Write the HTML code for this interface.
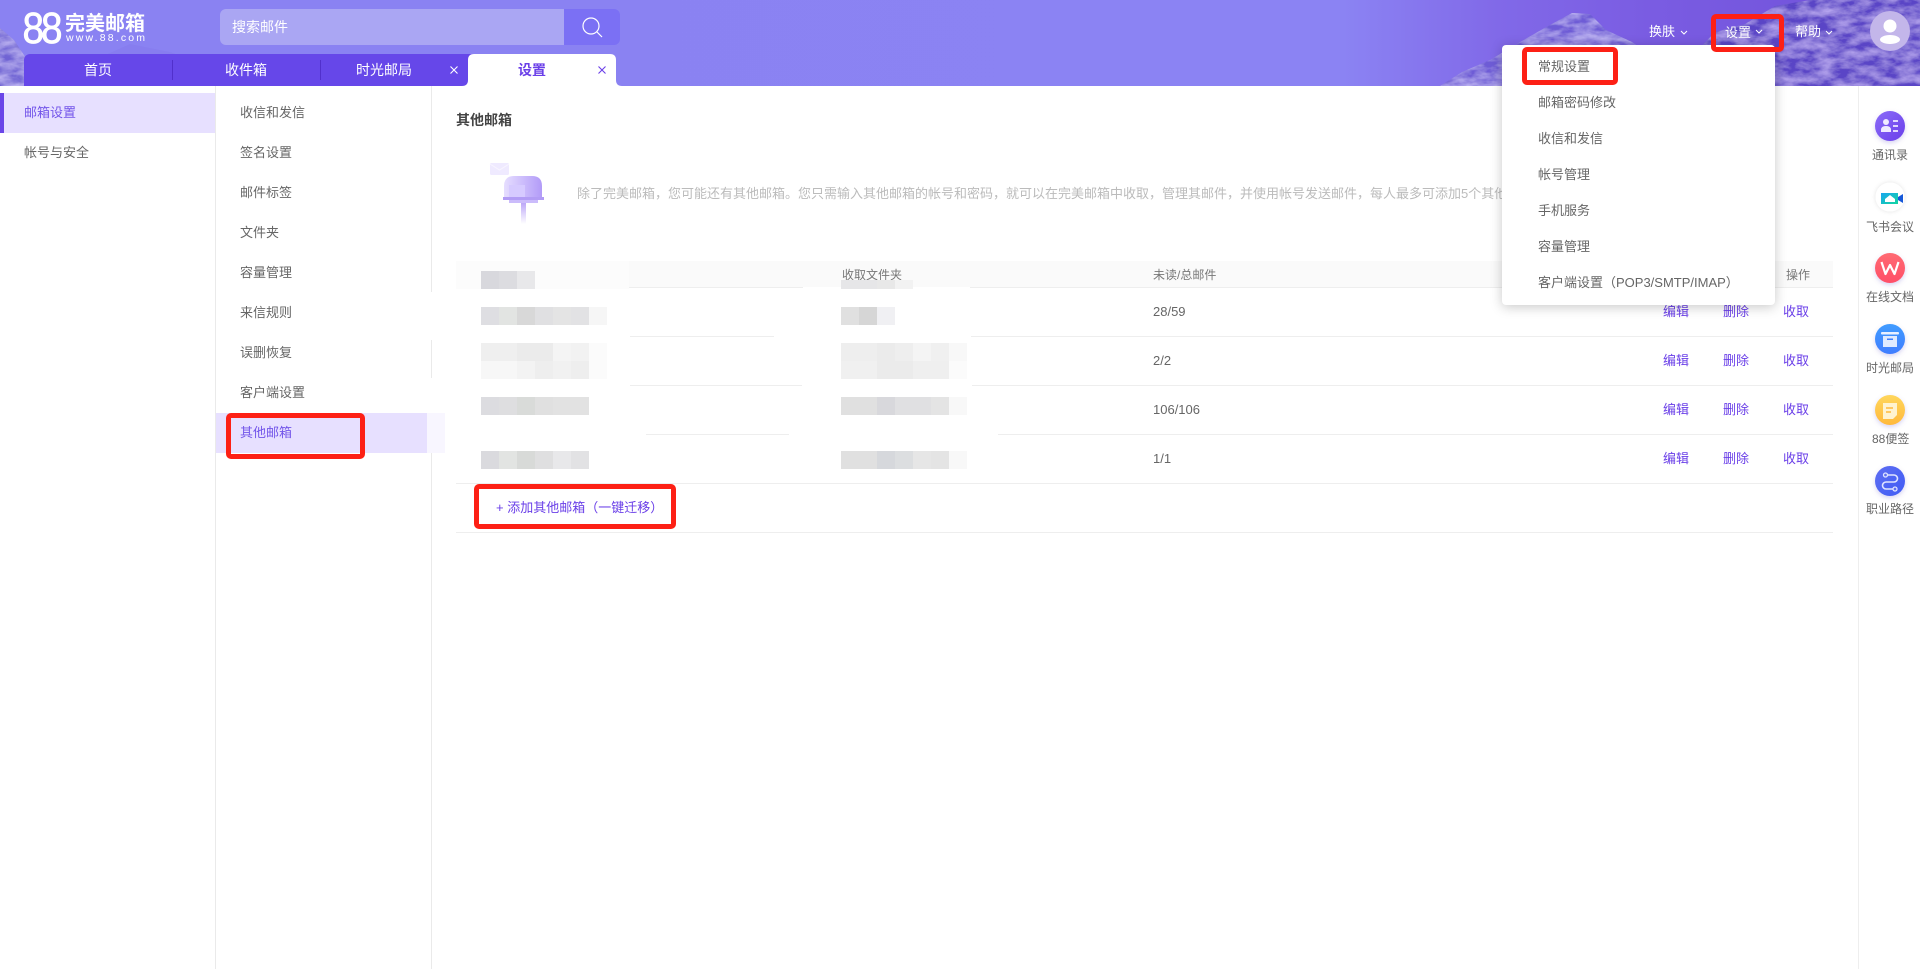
<!DOCTYPE html>
<html lang="zh-CN">
<head>
<meta charset="utf-8">
<title>88完美邮箱</title>
<style>
*{box-sizing:border-box}
html,body{margin:0;padding:0;width:1920px;height:969px;overflow:hidden;background:#fff}
body{position:relative;font-family:"Liberation Sans","Noto Sans CJK SC",sans-serif;font-size:13px;color:#666}
.t{position:absolute;white-space:nowrap;line-height:20px;height:20px;margin-top:1px}
.a{position:absolute}
.p{color:#6a3fe8}
.w{color:#fff}
.r{position:absolute;border:5px solid #fd2015;border-radius:5px;z-index:30}
.m{position:absolute;display:flex;height:18px}
.m i{display:block;width:18px;height:18px}
.l{position:absolute;height:1px;background:#eeeeee}
.c{font-size:12px}
</style>
</head>
<body>

<svg class="a" style="left:0;top:0" width="1920" height="86" viewBox="0 0 1920 86">
<defs>
<linearGradient id="sky" x1="0" y1="0" x2="1" y2="0">
<stop offset="0" stop-color="#8a82f2"/><stop offset=".7" stop-color="#8b83f3"/><stop offset=".78" stop-color="#8169e8"/><stop offset=".86" stop-color="#7a5ce2"/><stop offset="1" stop-color="#6f50d8"/>
</linearGradient>
<filter id="snow" x="0" y="0" width="100%" height="100%">
<feTurbulence type="fractalNoise" baseFrequency=".05 .12" numOctaves="4" seed="7" result="n"/>
<feColorMatrix in="n" type="matrix" values="0 0 0 0 .56  0 0 0 0 .50  0 0 0 0 .92  0 0 0 1.600 -.45" result="s"/>
<feComposite in="s" in2="SourceGraphic" operator="in" result="c"/>
<feMerge><feMergeNode in="SourceGraphic"/><feMergeNode in="c"/></feMerge>
</filter>
<filter id="rock" x="0" y="0" width="100%" height="100%">
<feTurbulence type="fractalNoise" baseFrequency=".06 .12" numOctaves="4" seed="12" result="n"/>
<feColorMatrix in="n" type="matrix" values="0 0 0 0 .46  0 0 0 0 .37  0 0 0 0 .85  0 0 0 1.600 -.45" result="s"/>
<feComposite in="s" in2="SourceGraphic" operator="in" result="c"/>
<feMerge><feMergeNode in="SourceGraphic"/><feMergeNode in="c"/></feMerge>
</filter>
</defs>
<rect width="1920" height="86" fill="url(#sky)"/>
<path d="M1440 86L1462 72 1490 60 1520 42 1548 26 1572 13 1590 14 1606 30 1632 42 1660 62 1690 86Z" fill="#6e5cd6" filter="url(#snow)"/>
<path d="M1665 86L1690 58 1715 32 1745 24 1775 6 1810 0 1920 0 1920 86Z" fill="#5a44c6" filter="url(#rock)"/>
<path d="M0 28L14 40 26 58 40 72 62 86 0 86Z" fill="#7064d4" filter="url(#snow)"/>
<path d="M60 86L90 62 130 44 170 52 215 68 250 86Z" fill="#8378ea" opacity=".45"/>
<g transform="translate(22.500,43) scale(.88,1)"><text x="0 21" y="0" font-family="Liberation Sans,sans-serif" font-size="44" fill="#fff" stroke="#fff" stroke-width=".7">88</text></g>
<text x="65" y="30" font-family="Noto Sans CJK SC,sans-serif" font-weight="700" font-size="20" fill="#fff">完美邮箱</text>
<text x="66" y="41" font-family="Liberation Sans,sans-serif" font-size="10.5" fill="#fff" textLength="79">www.88.com</text>
</svg>

<!-- search -->
<div class="a" style="left:220px;top:9px;width:344px;height:36px;background:#aaa6f3;border-radius:6px 0 0 6px"></div>
<div class="a" style="left:564px;top:9px;width:56px;height:36px;background:#7b70f4;border-radius:0 6px 6px 0"></div>
<div class="t w" style="left:232px;top:16px;font-size:14px;color:#fff">搜索邮件</div>
<svg class="a" style="left:580px;top:15px" width="24" height="24" viewBox="0 0 24 24" fill="none" stroke="#fff" stroke-width="1.200"><circle cx="11" cy="11" r="8"/><path d="M17 17l5 5"/></svg>

<!-- tabs -->
<div class="a" style="left:24px;top:54px;width:450px;height:32px;background:#6647e9;border-radius:6px 0 0 0"></div>
<div class="a" style="left:172px;top:60px;width:1px;height:20px;background:#5130cc"></div>
<div class="a" style="left:320px;top:60px;width:1px;height:20px;background:#5130cc"></div>
<svg class="a" style="left:460px;top:54px" width="164" height="32" viewBox="460 54 164 32"><path d="M462 86Q468 86 468 80V60Q468 54 474 54H610Q616 54 616 60V80Q616 86 622 86Z" fill="#fff"/></svg>
<div class="t w" style="left:84px;top:59px;font-size:14px">首页</div>
<div class="t w" style="left:225px;top:59px;font-size:14px">收件箱</div>
<div class="t w" style="left:356px;top:59px;font-size:14px">时光邮局</div>
<div class="t p" style="left:518px;top:59px;font-size:14px;font-weight:700">设置</div>
<svg class="a" style="left:450px;top:66px" width="8" height="8" fill="none" stroke="#fff" stroke-width="1.100"><path d="M.5.5l7 7M7.500.5l-7 7"/></svg>
<svg class="a" style="left:598px;top:66px" width="8" height="8" fill="none" stroke="#6a3fe8" stroke-width="1.100"><path d="M.5.5l7 7M7.500.5l-7 7"/></svg>

<!-- header right -->
<div class="t w" style="left:1649px;top:21px">换肤</div>
<div class="t w" style="left:1725px;top:22px">设置</div>
<div class="t w" style="left:1795px;top:21px">帮助</div>
<svg class="a" style="left:1680px;top:30px" width="8" height="6" fill="none" stroke="#fff"><path d="M1 1l3 3 3-3"/></svg>
<svg class="a" style="left:1755px;top:29px" width="8" height="6" fill="none" stroke="#fff"><path d="M1 1l3 3 3-3"/></svg>
<svg class="a" style="left:1825px;top:30px" width="8" height="6" fill="none" stroke="#fff"><path d="M1 1l3 3 3-3"/></svg>
<svg class="a" style="left:1870px;top:11px" width="40" height="40" viewBox="0 0 40 40"><circle cx="20" cy="20" r="20" fill="#c3b6ea"/><circle cx="20" cy="15" r="6.500" fill="#fff"/><ellipse cx="20" cy="28.500" rx="10" ry="4.500" fill="#fff"/></svg>

<!-- left menu -->
<div class="a" style="left:215px;top:86px;width:1px;height:883px;background:#eaeaea"></div>
<div class="a" style="left:431px;top:86px;width:1px;height:883px;background:#eaeaea"></div>
<div class="a" style="left:0;top:93px;width:215px;height:40px;background:#e7e0ff"></div>
<div class="a" style="left:0;top:93px;width:4px;height:40px;background:#6a46e8"></div>
<div class="t" style="left:24px;top:102px;color:#7355ea">邮箱设置</div>
<div class="t" style="left:24px;top:142px">帐号与安全</div>

<div class="a" style="left:216px;top:413px;width:211px;height:40px;background:#e7e0ff"></div>
<div class="a" style="left:427px;top:413px;width:18px;height:40px;background:#f8f6ff"></div>
<div class="a" style="left:431px;top:292px;width:3px;height:48px;background:#fff"></div>
<div class="a" style="left:431px;top:378px;width:3px;height:35px;background:#fff"></div>
<div class="t" style="left:240px;top:102px">收信和发信</div>
<div class="t" style="left:240px;top:142px">签名设置</div>
<div class="t" style="left:240px;top:182px">邮件标签</div>
<div class="t" style="left:240px;top:222px">文件夹</div>
<div class="t" style="left:240px;top:262px">容量管理</div>
<div class="t" style="left:240px;top:302px">来信规则</div>
<div class="t" style="left:240px;top:342px">误删恢复</div>
<div class="t" style="left:240px;top:382px">客户端设置</div>
<div class="t" style="left:240px;top:422px;color:#7355ea">其他邮箱</div>

<!-- content -->
<div class="t" style="left:456px;top:109px;font-size:14px;font-weight:700;color:#444">其他邮箱</div>
<svg class="a" style="left:488px;top:161px" width="60" height="66" viewBox="488 161 60 66">
<defs>
<linearGradient id="mb" x1="0" y1="0" x2="1" y2="0"><stop offset="0" stop-color="#e6deff"/><stop offset="1" stop-color="#b29bf8"/></linearGradient>
<linearGradient id="po" x1="0" y1="0" x2="0" y2="1"><stop offset="0" stop-color="#bda8f8"/><stop offset="1" stop-color="#fff"/></linearGradient>
</defs>
<rect x="490" y="163" width="19" height="12" rx="1.500" fill="#efeaff"/>
<path d="M490 164l9.500 6 9.500-6" fill="none" stroke="#f8f5ff"/>
<path d="M504 197V186Q504 176 514 176H532Q542 176 542 186V197Z" fill="url(#mb)"/>
<rect x="509" y="185" width="16" height="12" fill="#d6caff"/>
<rect x="503" y="197" width="41" height="3" fill="#b29cf5"/>
<rect x="509" y="200" width="29" height="3" fill="#cbbcfb"/>
<rect x="521" y="203" width="5" height="21" fill="url(#po)"/>
</svg>
<div class="t" style="left:577px;top:183px;color:#bbbbbb">除了完美邮箱，您可能还有其他邮箱。您只需输入其他邮箱的帐号和密码，就可以在完美邮箱中收取，管理其邮件，并使用帐号发送邮件，每人最多可添加5个其他邮箱</div>

<!-- table -->
<div class="a" style="left:456px;top:261px;width:1377px;height:26px;background:#fafafa"></div>
<div class="a" style="left:456px;top:261px;width:173px;height:28px;background:#fcfcfc"></div>
<div class="l" style="left:629px;top:287px;width:174px"></div>
<div class="l" style="left:970px;top:287px;width:863px"></div>
<div class="l" style="left:630px;top:336px;width:144px"></div>
<div class="l" style="left:971px;top:336px;width:862px"></div>
<div class="l" style="left:630px;top:385px;width:172px"></div>
<div class="l" style="left:972px;top:385px;width:861px"></div>
<div class="l" style="left:646px;top:434px;width:143px"></div>
<div class="l" style="left:998px;top:434px;width:835px"></div>
<div class="l" style="left:456px;top:483px;width:1377px"></div>
<div class="l" style="left:456px;top:532px;width:1377px"></div>

<div class="t c" style="left:842px;top:264px;color:#777">收取文件夹</div>
<div class="t c" style="left:1153px;top:264px;color:#777">未读/总邮件</div>
<div class="t c" style="left:1786px;top:264px;color:#777">操作</div>

<div class="t" style="left:1153px;top:301px">28/59</div>
<div class="t" style="left:1153px;top:350px">2/2</div>
<div class="t" style="left:1153px;top:399px">106/106</div>
<div class="t" style="left:1153px;top:448px">1/1</div>

<div class="t p" style="left:1663px;top:301px">编辑</div><div class="t p" style="left:1723px;top:301px">删除</div><div class="t p" style="left:1783px;top:301px">收取</div>
<div class="t p" style="left:1663px;top:350px">编辑</div><div class="t p" style="left:1723px;top:350px">删除</div><div class="t p" style="left:1783px;top:350px">收取</div>
<div class="t p" style="left:1663px;top:399px">编辑</div><div class="t p" style="left:1723px;top:399px">删除</div><div class="t p" style="left:1783px;top:399px">收取</div>
<div class="t p" style="left:1663px;top:448px">编辑</div><div class="t p" style="left:1723px;top:448px">删除</div><div class="t p" style="left:1783px;top:448px">收取</div>

<!-- mosaics -->
<div class="m" style="left:481px;top:271px"><i style="background:#d8d8dd"></i><i style="background:#dcdce0"></i><i style="background:#e8e8ea"></i></div>
<div class="m" style="left:481px;top:307px"><i style="background:#dedee2"></i><i style="background:#e2e4e2"></i><i style="background:#d8d8d8"></i><i style="background:#e0e0e2"></i><i style="background:#e4e4e4"></i><i style="background:#e2e2e4"></i><i style="background:#f6f6f6"></i></div>
<div class="m" style="left:481px;top:343px"><i style="background:#efefef"></i><i style="background:#efefef"></i><i style="background:#ebebeb"></i><i style="background:#ebebeb"></i><i style="background:#f4f4f4"></i><i style="background:#f2f2f2"></i><i style="background:#fbfbfb"></i></div>
<div class="m" style="left:481px;top:361px"><i style="background:#f7f7f7"></i><i style="background:#f7f7f7"></i><i style="background:#f3f3f3"></i><i style="background:#eeeeee"></i><i style="background:#f1f1f1"></i><i style="background:#eeeeee"></i><i style="background:#fbfbfb"></i></div>
<div class="m" style="left:481px;top:397px"><i style="background:#dcdce0"></i><i style="background:#dedee0"></i><i style="background:#d9dbd9"></i><i style="background:#e0e0e0"></i><i style="background:#e2e2e2"></i><i style="background:#e2e2e2"></i></div>
<div class="m" style="left:481px;top:451px"><i style="background:#dadade"></i><i style="background:#e2e4e2"></i><i style="background:#d8dad8"></i><i style="background:#dfdfe0"></i><i style="background:#e8e8ea"></i><i style="background:#e2e2e4"></i></div>

<div class="m" style="left:841px;top:280px;height:9px"><i style="background:#e6e6e8;height:9px"></i><i style="background:#e6e6e8;height:9px"></i><i style="background:#e8e8e8;height:9px"></i><i style="background:#f2f2f2;height:9px"></i></div>
<div class="m" style="left:841px;top:307px"><i style="background:#e0e0e0"></i><i style="background:#d6d6d6"></i><i style="background:#f0f0f3"></i></div>
<div class="m" style="left:841px;top:343px"><i style="background:#eeeeee"></i><i style="background:#eeeeee"></i><i style="background:#ebebeb"></i><i style="background:#eeeeee"></i><i style="background:#f4f4f4"></i><i style="background:#f0f0f0"></i><i style="background:#f8f8f8"></i></div>
<div class="m" style="left:841px;top:361px"><i style="background:#f0f0f0"></i><i style="background:#f0f0f0"></i><i style="background:#ebebeb"></i><i style="background:#ebebeb"></i><i style="background:#efefef"></i><i style="background:#efefef"></i><i style="background:#fbfbfb"></i></div>
<div class="m" style="left:841px;top:397px"><i style="background:#e0e0e0"></i><i style="background:#e0e0e0"></i><i style="background:#d8d8dc"></i><i style="background:#e0e0e2"></i><i style="background:#e0e0e2"></i><i style="background:#e4e4e4"></i><i style="background:#f8f8f8"></i></div>
<div class="m" style="left:841px;top:451px"><i style="background:#e0e0e0"></i><i style="background:#e0e0e0"></i><i style="background:#d6d8dc"></i><i style="background:#dcdee0"></i><i style="background:#e6e6e6"></i><i style="background:#e4e4e4"></i><i style="background:#f8f8f8"></i></div>

<div class="t p" style="left:496px;top:497px">+ 添加其他邮箱（一键迁移）</div>

<!-- right rail -->
<div class="a" style="left:1858px;top:86px;width:1px;height:883px;background:#eeeeee"></div>
<svg class="a" style="left:1860px;top:100px" width="60" height="410" viewBox="1860 100 60 410">
<defs>
<filter id="sp" x="-30%" y="-30%" width="160%" height="160%"><feDropShadow dx="0" dy="2" stdDeviation="2.500" flood-color="#7a70d0" flood-opacity=".3"/></filter>
<filter id="sg" x="-30%" y="-30%" width="160%" height="160%"><feDropShadow dx="0" dy="0" stdDeviation="2" flood-color="#000" flood-opacity=".12"/></filter>
<linearGradient id="g1" x1="0" y1="0" x2="1" y2="1"><stop offset="0" stop-color="#8b6cf8"/><stop offset="1" stop-color="#6a3fea"/></linearGradient>
<linearGradient id="g2" x1="0" y1="0" x2="0" y2="1"><stop offset="0" stop-color="#ff6a72"/><stop offset="1" stop-color="#ff4f68"/></linearGradient>
<linearGradient id="g3" x1="0" y1="0" x2="0" y2="1"><stop offset="0" stop-color="#3f9cff"/><stop offset="1" stop-color="#3f7dff"/></linearGradient>
<linearGradient id="g4" x1="0" y1="0" x2="0" y2="1"><stop offset="0" stop-color="#ffd65c"/><stop offset="1" stop-color="#ffb93c"/></linearGradient>
<linearGradient id="g5" x1="0" y1="0" x2="1" y2="1"><stop offset="0" stop-color="#5f6ef2"/><stop offset="1" stop-color="#3f5cf5"/></linearGradient>
<linearGradient id="fs" x1="0" y1="0" x2="1" y2="1"><stop offset="0" stop-color="#19a6f0"/><stop offset="1" stop-color="#14d6a0"/></linearGradient>
</defs>
<circle cx="1890" cy="126" r="15" fill="url(#g1)" filter="url(#sp)"/>
<circle cx="1886" cy="122" r="3" fill="#efeaff"/><path d="M1881 132v-2q0-4 5-4t5 4v2z" fill="#efeaff"/><path d="M1893 121h5M1893 126h5M1893 131h5" stroke="#efeaff" stroke-width="1.800"/>
<circle cx="1890" cy="197" r="14.500" fill="#fff" filter="url(#sg)"/>
<path d="M1881 193h17v11h-17z" fill="url(#fs)"/><path d="M1898 197l5-3v9l-5-3z" fill="#1557d8"/><path d="M1885 202v-3l5-4 5 4v3z" fill="#fff"/>
<circle cx="1890" cy="268" r="15" fill="url(#g2)" filter="url(#sp)"/>
<path d="M1881.500 262l4 12 4.500-9 4.500 9 4-12" fill="none" stroke="#fff" stroke-width="2.200" stroke-linejoin="round"/>
<circle cx="1890" cy="339" r="15" fill="url(#g3)" filter="url(#sp)"/>
<rect x="1881" y="332" width="18" height="2.500" rx="1" fill="#e8f0ff"/><rect x="1883" y="336" width="14" height="11" fill="#dfeaff"/><rect x="1887" y="338.500" width="6" height="1.500" fill="#3f80ff"/>
<circle cx="1890" cy="410" r="15" fill="url(#g4)" filter="url(#sp)"/>
<path d="M1883 403h14v12l-4 4h-10z" fill="#fff3d0"/><path d="M1886 408h7M1886 412h5" stroke="#ffb93c" stroke-width="1.600"/>
<circle cx="1890" cy="481" r="15" fill="url(#g5)" filter="url(#sp)"/>
<path d="M1887 475h7a3.500 3.500 0 0 1 0 7h-8a3.500 3.500 0 0 0 0 7h7" fill="none" stroke="#dfe4ff" stroke-width="1.600"/><circle cx="1885.500" cy="475" r="2" fill="#5f6ef2" stroke="#dfe4ff" stroke-width="1.300"/><circle cx="1895" cy="489" r="2" fill="#5f6ef2" stroke="#dfe4ff" stroke-width="1.300"/>
</svg>
<div class="t c" style="left:1872px;top:144px">通讯录</div>
<div class="t c" style="left:1866px;top:216px">飞书会议</div>
<div class="t c" style="left:1866px;top:286px">在线文档</div>
<div class="t c" style="left:1866px;top:357px">时光邮局</div>
<div class="t c" style="left:1872px;top:428px">88便签</div>
<div class="t c" style="left:1866px;top:498px">职业路径</div>

<!-- dropdown -->
<div class="a" style="left:1502px;top:45px;width:273px;height:260px;background:#fff;border-radius:4px;box-shadow:0 2px 12px rgba(0,0,0,.22);z-index:20"></div>
<div class="t" style="left:1538px;top:56px;z-index:21">常规设置</div>
<div class="t" style="left:1538px;top:92px;z-index:21">邮箱密码修改</div>
<div class="t" style="left:1538px;top:128px;z-index:21">收信和发信</div>
<div class="t" style="left:1538px;top:164px;z-index:21">帐号管理</div>
<div class="t" style="left:1538px;top:200px;z-index:21">手机服务</div>
<div class="t" style="left:1538px;top:236px;z-index:21">容量管理</div>
<div class="t" style="left:1538px;top:272px;z-index:21">客户端设置（POP3/SMTP/IMAP）</div>

<!-- annotations -->
<div class="r" style="left:1711px;top:14px;width:73px;height:38px"></div>
<div class="r" style="left:1522px;top:47px;width:96px;height:38px"></div>
<div class="r" style="left:226px;top:413px;width:139px;height:46px"></div>
<div class="r" style="left:474px;top:484px;width:202px;height:45px"></div>

</body>
</html>
